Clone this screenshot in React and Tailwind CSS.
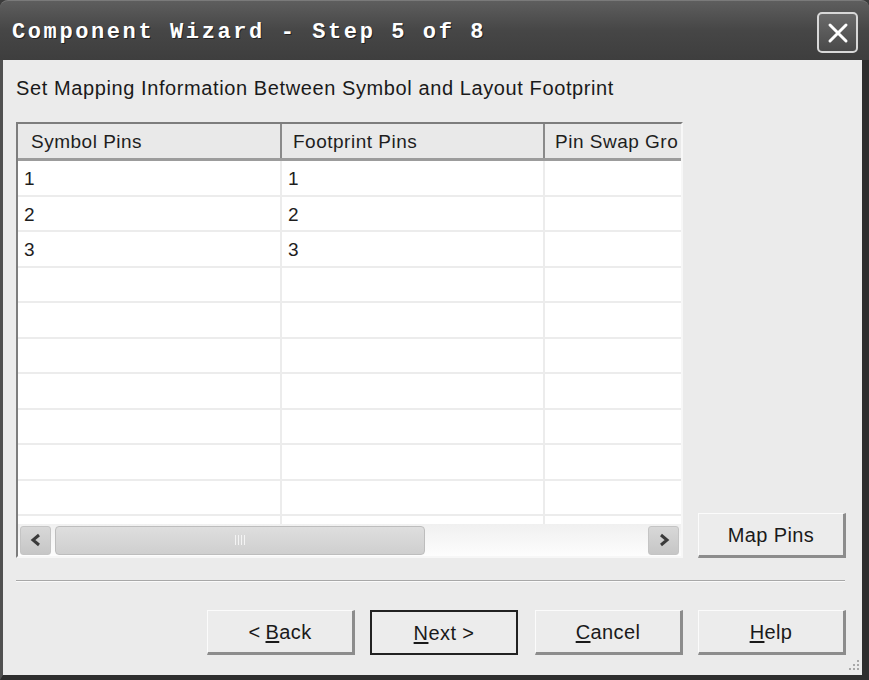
import React from 'react';

const rows = ['1', '2', '3', '', '', '', '', '', '', '', ''];

const WinButton = ({ children, isDefault, className = '' }) => (
  <div
    className={`flex items-center justify-center w-[148px] h-[45px] bg-[#ececec] text-[20px] tracking-[0.4px] text-[#1a1a1a] ${
      isDefault
        ? 'border-2 border-[#222]'
        : 'border-t border-l border-t-[#fbfbfb] border-l-[#fbfbfb] border-b-[3px] border-r-[3px] border-b-[#8c8c8c] border-r-[#8c8c8c]'
    } ${className}`}
  >
    {children}
  </div>
);

const Chevron = ({ dir }) => (
  <svg width="12" height="14" viewBox="0 0 12 14">
    <polyline
      points={dir === 'left' ? '9,2 3,7 9,12' : '3,2 9,7 3,12'}
      fill="none"
      stroke="#3a3a3a"
      strokeWidth="3"
    />
  </svg>
);

export default function App() {
  return (
    <div
      className="w-[869px] h-[680px] flex flex-col bg-[#3c3c3c]"
      style={{ fontFamily: '"Liberation Sans", Arial, sans-serif' }}
    >
      {/* Title bar */}
      <div className="h-[60px] flex items-center justify-between pl-[12px] pr-[11px] pt-[4px] rounded-t-[8px] bg-gradient-to-b from-[#5e5e5e] via-[#464646] to-[#3e3e3e] border-t border-[#7a7a7a]">
        <div
          className="text-white font-bold text-[22px] tracking-[2.6px] [text-shadow:1px_1px_0_#222]"
          style={{ fontFamily: '"Liberation Mono", "Courier New", monospace' }}
        >
          Component Wizard - Step 5 of 8
        </div>
        <div className="w-[41px] h-[41px] rounded-[5px] border-2 border-[#d8d8d8] bg-gradient-to-b from-[#6a6a6a] to-[#4a4a4a] flex items-center justify-center">
          <svg width="24" height="24" viewBox="0 0 24 24">
            <path d="M4 4 L20 20 M20 4 L4 20" stroke="#fff" strokeWidth="3" strokeLinecap="round" />
          </svg>
        </div>
      </div>

      {/* Body */}
      <div className="flex-1 flex flex-col bg-[#ebebeb] border-l-[3px] border-l-[#505050] border-r-[7px] border-r-[#2e2e2e] border-b-[5px] border-b-[#2e2e2e] relative">
        <div className="pl-[13px] pt-[16px] text-[20px] leading-[24px] tracking-[0.6px] text-[#1a1a1a]">
          Set Mapping Information Between Symbol and Layout Footprint
        </div>

        <div className="flex items-end mt-[22px] ml-[13px]">
          {/* Table */}
          <div className="w-[667px] h-[436px] flex flex-col bg-white border-2 border-t-[#7d7d7d] border-l-[#7d7d7d] border-b-[#f7f7f7] border-r-[#f7f7f7] overflow-hidden">
            <div className="flex h-[37px] shrink-0 bg-[#e9e9e9] border-b-[3px] border-b-[#9c9c9c] text-[19px] tracking-[0.5px] text-[#1e1e1e]">
              <div className="w-[264px] shrink-0 pl-[13px] pt-[3px] flex items-center border-r-2 border-r-[#8a8a8a]">Symbol Pins</div>
              <div className="w-[263px] shrink-0 pl-[11px] pt-[3px] flex items-center border-r-2 border-r-[#8a8a8a]">Footprint Pins</div>
              <div className="w-[200px] shrink-0 pl-[10px] pt-[3px] flex items-center whitespace-nowrap">Pin Swap Gro</div>
            </div>
            <div className="flex-1 overflow-hidden">
              {rows.map((r, i) => (
                <div key={i} className="flex h-[35.5px] border-b-2 border-b-[#ececec] text-[19px] text-[#1e1e1e]">
                  <div className="w-[264px] shrink-0 pl-[6px] pt-[3px] flex items-center border-r-2 border-r-[#ececec]">{r}</div>
                  <div className="w-[263px] shrink-0 pl-[6px] pt-[3px] flex items-center border-r-2 border-r-[#ececec]">{r}</div>
                  <div className="flex-1" />
                </div>
              ))}
            </div>
            {/* Horizontal scrollbar */}
            <div className="h-[32px] shrink-0 flex items-center gap-[4px] px-[2px] bg-gradient-to-b from-[#f0f0f0] to-[#fdfdfd]">
              <div className="w-[31px] h-[29px] rounded-[3px] border border-[#c4c4c4] bg-gradient-to-b from-[#d8d8d8] to-[#c6c6c6] flex items-center justify-center">
                <Chevron dir="left" />
              </div>
              <div className="w-[370px] h-[29px] rounded-[4px] border border-[#bdbdbd] bg-gradient-to-b from-[#dedede] to-[#cfcfcf] flex items-center justify-center">
                <div className="flex gap-[2px]">
                  <div className="w-px h-[10px] bg-[#f4f4f4]" />
                  <div className="w-px h-[10px] bg-[#f4f4f4]" />
                  <div className="w-px h-[10px] bg-[#f4f4f4]" />
                  <div className="w-px h-[10px] bg-[#f4f4f4]" />
                </div>
              </div>
              <div className="flex-1" />
              <div className="w-[31px] h-[29px] rounded-[3px] border border-[#c4c4c4] bg-gradient-to-b from-[#d8d8d8] to-[#c6c6c6] flex items-center justify-center">
                <Chevron dir="right" />
              </div>
            </div>
          </div>

          <WinButton className="ml-[15px]">Map Pins</WinButton>
        </div>

        {/* Separator */}
        <div className="mt-[22px] ml-[13px] mr-[17px] border-t border-t-[#a8a8a8] border-b border-b-[#fafafa]" />

        {/* Buttons */}
        <div className="flex justify-end gap-[15px] mt-[28px] mr-[16px]">
          <WinButton>
            &lt; <span className="underline underline-offset-2 ml-[5px]">B</span>ack
          </WinButton>
          <WinButton isDefault>
            <span className="underline underline-offset-2">N</span>ext &gt;
          </WinButton>
          <WinButton className="ml-[2px]">
            <span className="underline underline-offset-2">C</span>ancel
          </WinButton>
          <WinButton>
            <span className="underline underline-offset-2">H</span>elp
          </WinButton>
        </div>

        {/* Resize grip */}
        <svg className="absolute right-[1px] bottom-[1px]" width="16" height="16" viewBox="0 0 16 16">
          {[[12, 2], [8, 6], [12, 6], [4, 10], [8, 10], [12, 10]].map(([x, y], i) => (
            <rect key={i} x={x} y={y} width="2" height="2" fill="#a8a8a8" />
          ))}
        </svg>
      </div>
    </div>
  );
}
